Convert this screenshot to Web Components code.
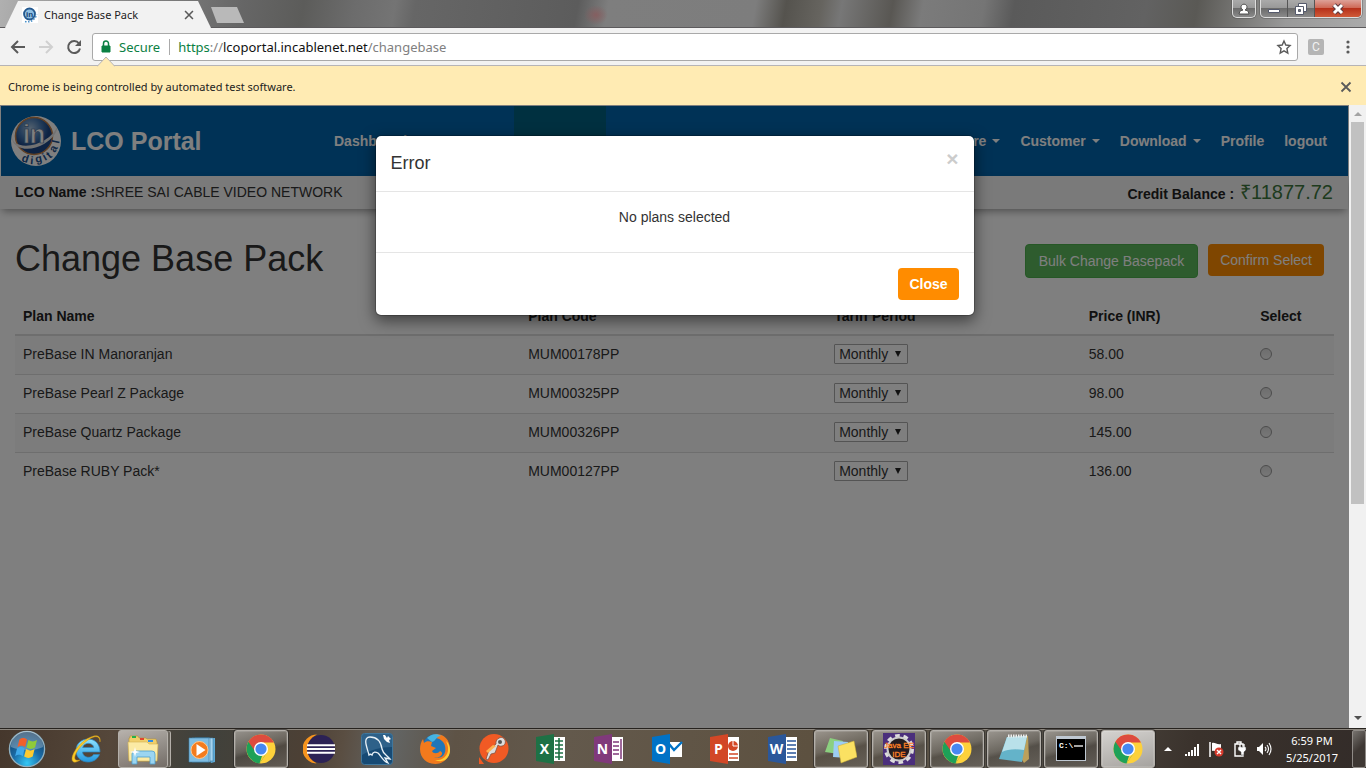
<!DOCTYPE html>
<html lang="en">
<head>
<meta charset="utf-8">
<title>Change Base Pack</title>
<style>
html, body { height: 100%; }
body { margin: 0; font-family: "Liberation Sans", Arial, sans-serif; font-size: 14px; line-height: 20px; color: #333; }
</style>
</head>
<body>
<desktop-screen></desktop-screen>

<script>
const define = (name, html, setup) => {
  const template = document.createElement('template');
  template.innerHTML = html;
  customElements.define(name, class extends HTMLElement {
    constructor() {
      super();
      this.attachShadow({ mode: 'open' }).append(template.content.cloneNode(true));
    }
    connectedCallback() { if (setup) setup(this, this.shadowRoot); }
  });
};

/* ---------- icons ---------- */
const office = (letter, dark, page) => `<svg viewBox="0 0 32 32">
  <path d="M16 4h14v24H16z" fill="#fff"/>${page}
  <path d="M1 4 19 1v30L1 28z" fill="${dark}"/>
  <text x="9.5" y="21" text-anchor="middle" font-family="Open Sans,sans-serif" font-weight="700" font-size="14" fill="#fff">${letter}</text></svg>`;

const ICONS = {
  start: `<svg viewBox="0 0 40 40"><defs><radialGradient id="g" cx=".5" cy=".9" r=".9"><stop offset="0" stop-color="#35c8f5"/><stop offset=".45" stop-color="#1a6ca8"/><stop offset="1" stop-color="#143a5c"/></radialGradient></defs>
   <circle cx="20" cy="20" r="18.5" fill="url(#g)" stroke="#8fb0c0" stroke-width="1.4"/><path d="M3 18a17 17 0 0 1 34 0c-8 4-25 4-34 0z" fill="#fff" opacity=".28"/>
   <path d="M12 10c3-2 5-2 8 0l-2 8c-3-2-5-2-8 0z" fill="#f0602c"/><path d="M21.500 10.500c3 2 6 2 9 0l-2 8c-3 2-6 2-9 0z" fill="#8fca3a"/><path d="M9.500 19.500c3-2 5-2 8 0l-2 8c-3-2-5-2-8 0z" fill="#3fa9ea"/><path d="M19 20c3 2 6 2 9 0l-2 8c-3 2-6 2-9 0z" fill="#fcca30"/></svg>`,
  ie: `<svg viewBox="0 0 32 32"><defs><linearGradient id="g" x2="0" y2="1"><stop offset="0" stop-color="#8fe3ff"/><stop offset="1" stop-color="#2397dd"/></linearGradient></defs>
   <path d="M29 19H11.500c.5 6 9 7 11 2.500h6C24 33 5 31 5 17.500 5 3 29 1 29 19zM11.700 14.500h11c-.5-5.500-10-5.500-11 0z" fill="url(#g)" stroke="#2b85c0" stroke-width=".7"/>
   <path d="M29 9c1-5-2-8-9-5C11 7 1 19 1 26c0 4 4 4 8 1-4 1-6 0-5-4C6 16 16 6 23 4c4-1 6 1 6 5z" fill="#fccb25" stroke="#c9931a" stroke-width=".5"/></svg>`,
  explorer: `<svg viewBox="0 0 32 32"><path d="M2 5h1V3h8l1 2h7l1 1h9l1 3v19H2z" fill="#f0cf6b" stroke="#b99538" stroke-width=".6"/><path d="M5 3h4v2H5z" fill="#25b14b"/><path d="M13 5h4v2h-4z" fill="#e2442e"/><path d="M21 7h5v2h-5z" fill="#2f8ee5"/>
   <path d="M1 9h19l2 2h9l-1 17H2z" fill="#fbeaa4" stroke="#d3b251" stroke-width=".6"/><path d="M5 31V21q0-3 3-3h17q3 0 3 3v10h-5v-7H10v7z" fill="#9bd5f1" stroke="#4c9fce" stroke-width=".8"/><path d="m8 14 1 4 4 1-4 1-1 4-1-4-4-1 4-1z" fill="#fff"/></svg>`,
  wmp: `<svg viewBox="0 0 32 32"><path d="M10 5h18v24l-4 1z" fill="#5fa9d4"/><path d="M8 5h18v23H8z" fill="#a5d3ee" stroke="#3c7fa8" stroke-width=".6"/><path d="M5 5h18v24H5z" fill="#bfe2f5" stroke="#3c7fa8" stroke-width=".6"/><path d="M2 5h20v24H2z" fill="#7fbde2" stroke="#3c7fa8" stroke-width=".6"/><circle cx="12.500" cy="17" r="8.500" fill="#f47c1e" stroke="#ffc78b"/><path d="m9.500 11 9 6-9 6z" fill="#fff"/></svg>`,
  chrome: `<svg viewBox="0 0 32 32"><circle cx="16" cy="16" r="14.500" fill="#fdd13b"/><path d="M16 16 3.400 8.800A14.500 14.500 0 0 0 14.500 30.400L22 19.500z" fill="#1ea158"/><path d="M3.400 8.800A14.500 14.500 0 0 1 29 9.500H16l-6.500 8z" fill="#dd4b3e"/><path d="m22 19.500-7.500 10.900L20 14z" fill="#fdd13b"/><circle cx="16" cy="16" r="7" fill="#fff"/><circle cx="16" cy="16" r="5.600" fill="#4688f1"/></svg>`,
  eclipse: `<svg viewBox="0 0 32 32"><path d="M14 1.500a14.500 14.500 0 0 0 0 29 16 16 0 0 1 0-29z" fill="#f7941e"/><circle cx="18" cy="16" r="14" fill="#2c2255"/><path d="M4 12.200h28M3.800 16h28.400M4 19.800h28" stroke="#fff" stroke-width="1.900"/></svg>`,
  mysql: `<svg viewBox="0 0 32 32"><rect x=".5" y=".5" width="31" height="31" rx="3" fill="#174a74" stroke="#3f779d"/><path d="M1 1h30v13Q14 14 1 22z" fill="#3d7297" opacity=".6"/><path d="M11 22c-1-1-2-1-3 0-1-4-2-6-3-11C4 6 6 4 9 4c7 0 11 5 12 12 1 5 5 6 8 10l-5-1 3 5c-5-2-7-7-10-10-2-1-5-2-6 2z" fill="none" stroke="#e8f1f7" stroke-width="1.300"/><path d="m22 2 1 4 3 3 3 1-1-3 2-1-3-3-1 2-2-3z" fill="#fff"/></svg>`,
  firefox: `<svg viewBox="0 0 32 32"><circle cx="17" cy="14" r="13" fill="#2076b9"/><path d="M14 2c8-3 17 3 17 14 0 8-6 15-14.500 15S1 25 1 16c0-4 1-7 3-10l1 4c2-2 5-2 8-1l-1 4 5 2-4 3c1 3 6 3 8 0 5 2 0 8-6 6 7 3 13-2 11-11-1-4-4-7-9-8z" fill="#f27a1d"/><path d="M27 8c6 12-2 20-11 19 15 6 19-13 11-19z" fill="#ffcd33"/><path d="M8 5c4-4 10-5 14-2-5 0-5 5-9 6z" fill="#45b4e2"/></svg>`,
  postman: `<svg viewBox="0 0 32 32"><circle cx="17" cy="15.500" r="14.500" fill="#f15a24"/><path d="M2 24 7 31H2z" fill="#f15a24"/><path d="m9 26 3-9 7-6c-1-6 7-9 9-4 2 5-4 8-7 5l-3 8-4 1-3 6z" fill="#ddd" stroke="#84503d" stroke-width=".8"/><circle cx="23" cy="9" r="2" fill="#555"/><path d="m9 18 7-6 3 1-8 7z" fill="#ffb04f"/></svg>`,
  excel: office('X', '#1e7145', '<path d="M20 8h8M20 12h8M20 16h8M20 20h8M20 24h8M24 5v22" stroke="#1e7145" stroke-width="1.600"/>'),
  onenote: office('N', '#80397b', '<path d="M20 9h6M20 13h6M20 17h6M20 21h6M28 6v20" stroke="#80397b" stroke-width="1.500"/>'),
  outlook: `<svg viewBox="0 0 32 32"><path d="M17 9h14v15H17z" fill="#fff"/><path d="m18 11 5 6 8-8" stroke="#0072c6" stroke-width="2.400" fill="none"/><path d="M1 4 19 1v30L1 28z" fill="#0072c6"/><text x="9.500" y="21" text-anchor="middle" font-family="Open Sans,sans-serif" font-weight="700" font-size="14" fill="#fff">O</text></svg>`,
  powerpoint: office('P', '#d24726', '<circle cx="24" cy="13" r="5" fill="#d24726"/><path d="M24 13V8M24 13h5" stroke="#fff"/><path d="M20 21h9M20 25h9" stroke="#d24726" stroke-width="1.500"/>'),
  word: office('W', '#2b579a', '<path d="M20 8h9M20 12h9M20 16h9M20 20h9M20 24h9" stroke="#2b579a" stroke-width="1.500"/>'),
  sticky: `<svg viewBox="0 0 32 32"><path d="m5 5 13 3-4 13L0 19z" fill="#8bd07f"/><path d="m9 8 14 1-1 16-14-1z" fill="#9ccdf4"/><path d="m13 13 16-5 3 16-16 6z" fill="#fbe162" stroke="#c9ad35" stroke-width=".5"/></svg>`,
  javaee: `<svg viewBox="0 0 32 32"><path d="M0 0h32v32H0z" fill="#4b2f7c"/><circle cx="16" cy="16" r="13" fill="none" stroke="#ddd" stroke-width="4" stroke-dasharray="4.500 3.660"/><circle cx="16" cy="16" r="11.500" fill="#241d20" stroke="#ccc" stroke-width="2"/><g font-family="Liberation Sans,sans-serif" font-size="8" fill="#ff8a2e" stroke="#ff7e22" stroke-width=".3" text-anchor="middle"><text x="16" y="15">Java EE</text><text x="16" y="24">IDE</text></g></svg>`,
  notepad: `<svg viewBox="0 0 32 32"><path d="m10 4 20-1 1 23-5 4z" fill="#bca05b"/><path d="m9 4 20-1-5 26-23-3z" fill="#64b3c9"/><path d="M9 4 29 3l-3 14Q12 15 4 19z" fill="#b9e1ea"/><path d="M10 3h19" stroke="#eee" stroke-width="3" stroke-dasharray="1.500 1"/></svg>`,
  cmd: `<svg viewBox="0 0 32 32"><path d="M1 3h30v25H1z" fill="#bfc8d2"/><path d="M2 6h28v21H2z"/><text x="4" y="15" font-family="Liberation Mono,monospace" font-weight="700" font-size="8" fill="#fff">C:\\</text><path d="M19 13h9" stroke="#fff" stroke-width="1.300"/></svg>`,
  signal: `<svg viewBox="0 0 16 16"><path d="M1 13h2v2H1zM4 11h2v4H4zM7 9h2v6H7zM10 6h2v9h-2zM13 3h2v12h-2z" fill="#fff"/></svg>`,
  flag: `<svg viewBox="0 0 16 16"><path d="M2 1v15" stroke="#fff" stroke-width="1.500"/><path d="M4 2c3-1 5 2 9 1v8c-4 1-6-2-9-1z" fill="#fff"/><circle cx="11" cy="11" r="4.500" fill="#d63a2c"/><path d="m9 9 4 4m0-4-4 4" stroke="#fff" stroke-width="1.400"/></svg>`,
  plug: `<svg viewBox="0 0 16 16"><path d="M3 3h8v12H3zM5 1h4v2H5z" fill="none" stroke="#fff" stroke-width="1.400"/><path d="M6 6h8v3l-2 2v3h-3v-3L6 9z" fill="#fff" stroke="#444" stroke-width=".5"/><path d="M8 3v4m4-4v4" stroke="#fff" stroke-width="1.300"/></svg>`,
  volume: `<svg viewBox="0 0 16 16"><path d="M1 6h2l4-4v12l-4-4H1z" fill="#fff"/><path d="M9 6q2 2 0 4M11 4q3 4 0 8M13 2q4 6 0 12" fill="none" stroke="#fff" stroke-width="1.100"/></svg>`,
  trayup: `<svg viewBox="0 0 16 16"><path d="M4 10 8 6l4 4z" fill="#fff"/></svg>`,
  scrollup: `<svg viewBox="0 0 16 16"><path d="M4 10 8 6l4 4z" fill="#a3a3a3"/></svg>`,
  scrolldown: `<svg viewBox="0 0 16 16"><path d="m4 6 4 4 4-4z" fill="#505050"/></svg>`,
  back: `<svg viewBox="0 0 16 16"><path d="M15 8H2.500M8 2 2 8l6 6" fill="none" stroke="#5a5a5a" stroke-width="2"/></svg>`,
  forward: `<svg viewBox="0 0 16 16"><path d="M1 8h12.500M8 2l6 6-6 6" fill="none" stroke="#d0d0d0" stroke-width="2"/></svg>`,
  reload: `<svg viewBox="0 0 16 16"><path d="M13 4.500A6 6 0 1 0 14 9.500" fill="none" stroke="#5a5a5a" stroke-width="2"/><path d="M15 1v6H9z" fill="#5a5a5a"/></svg>`,
  lock: `<svg viewBox="0 0 16 16"><path d="M4 7h8v6H4z" fill="#0b8043" stroke="#0b8043" stroke-linejoin="round"/><path d="M5.500 7V4.500a2.500 2.500 0 0 1 5 0V7" fill="none" stroke="#0b8043" stroke-width="1.500"/></svg>`,
  star: `<svg viewBox="0 0 16 16"><path d="m8 2 1.800 4 4.300.5-3.200 3 .9 4.500L8 11.800 4.200 14l.9-4.500-3.200-3L6.200 6z" fill="none" stroke="#5a5a5a" stroke-width="1.400"/></svg>`,
  dots: `<svg viewBox="0 0 16 16"><g fill="#5a5a5a"><circle cx="8" cy="3" r="1.600"/><circle cx="8" cy="8" r="1.600"/><circle cx="8" cy="13" r="1.600"/></g></svg>`,
  cross: `<svg viewBox="0 0 16 16"><path d="m3.500 3.500 9 9m0-9-9 9" stroke="#5a5a5a" stroke-width="1.800"/></svg>`,
  person: `<svg viewBox="0 0 16 16"><path d="M3 13q0-4 4-4a3 3 0 1 1 2 0q4 0 4 4z" fill="#fff" stroke="#444" stroke-width=".9"/></svg>`,
  minimize: `<svg viewBox="0 0 16 16"><path d="M2.500 8.500h11v3h-11z" fill="#fff" stroke="#555a6c"/></svg>`,
  restore: `<svg viewBox="0 0 16 16"><path d="M5.500 2.500h8v8h-8z" fill="#fff" stroke="#555a6c"/><path d="M2.500 5.500h8v8h-8z" fill="#fff" stroke="#555a6c"/><path d="M5.500 8.500h2v2h-2z" fill="#777" stroke="#555a6c"/></svg>`,
  close: `<svg viewBox="0 0 16 16"><path d="m4 4 8 8m0-8-8 8" stroke="#5c3a40" stroke-width="5"/><path d="m4 4 8 8m0-8-8 8" stroke="#fff" stroke-width="3"/></svg>`,
  digital: `<svg viewBox="0 0 50 50"><defs><radialGradient id="g" cx=".4" cy=".3"><stop offset="0" stop-color="#a9c4de"/><stop offset=".6" stop-color="#4478b4"/><stop offset="1" stop-color="#1c4787"/></radialGradient></defs>
   <circle cx="25" cy="25" r="25" fill="#fff"/><circle cx="23" cy="20" r="18.500" fill="url(#g)" stroke="#c28048" stroke-width="1.500"/>
   <path d="M1 22C2 34 20 36 33 28 41 23 47 16 46 11 41 24 16 36 3 26z" fill="#e4e4e4"/><text x="23" y="27" text-anchor="middle" font-family="Liberation Sans,sans-serif" font-size="25" font-weight="700" fill="#fff" stroke="#4d6d96" stroke-width=".7">in</text>
   <g font-family="Liberation Sans,sans-serif" font-size="11" font-weight="700" fill="#1c4f8c"><text x="10 19 25 34" y="45 48 47 45" rotate="18 5 -12 -30">digi</text><text x="39 44 48" y="43 37 28" rotate="-42 -62 -78">tal</text></g></svg>`,
  favicon: `<svg viewBox="0 0 16 16"><path d="M0 0h16v16H0z" fill="#fff"/><circle cx="7.500" cy="7" r="5.500" fill="#8fc0e4" stroke="#24598f" stroke-width="1.800"/><text x="7.500" y="10" text-anchor="middle" font-family="Liberation Sans,sans-serif" font-weight="700" font-size="8" fill="#173f73">in</text><path d="M3 14.500q8 2 12-7" fill="none" stroke="#4a90c8" stroke-width="1.500" stroke-dasharray="1.500 1.500"/></svg>`
};
customElements.define('ui-icon', class extends HTMLElement {
  constructor() { super(); this.attachShadow({ mode: 'open' }); }
  connectedCallback() {
    this.shadowRoot.innerHTML = `<style>:host{display:block;flex:none;width:var(--icon-size,16px);height:var(--icon-size,16px)}svg{display:block;width:100%;height:100%}</style>${ICONS[this.getAttribute('name')] || ''}`;
  }
});

/* ---------- browser window ---------- */
define('window-titlebar', `<style>
:host{display:flex;flex:none;height:28px;box-sizing:border-box;border-bottom:1px solid #5c5a5c;padding-left:5px;font:11px/16px "Noto Sans",sans-serif;color:#222;
 background:radial-gradient(ellipse 12px 10px at 596px 15px,#8a5a5ccc,transparent),linear-gradient(100deg,#b0b0b0 0,#a0a0a0 40px,#666 240px,#5c5c5a 300px,#6c6c6c 350px,#747474 390px,#666 410px,#5c5c5c 570px,#7e7e7e 600px,#7d7d7d 745px,#55534e 775px,#66645f 810px,#777 830px,#595753 880px,#7b7b7b 910px,#757575 970px,#5a5a5a 1000px,#626262 1130px,#5a5955 1180px,#999 1270px,#aaa 100%)}
.tab{display:flex;align-items:center;width:206px;box-sizing:border-box;padding:2px 15px 0 17px;background:#f2f2f2;clip-path:polygon(13px 1px,193px 1px,100% 100%,0 100%);margin-bottom:-1px}
.title{flex:1;margin-left:6px}
button{border:0;padding:0;background:none;display:grid;place-items:center}
.new{width:33px;height:16px;margin-top:7px;background:#b9b9b9;clip-path:polygon(0 0,26px 0,100% 100%,6px 100%)}
.user{margin-left:auto}
.ctl{display:flex;height:18px;box-sizing:border-box;border:1px solid #ddd;border-top:0;border-radius:0 0 5px 5px;overflow:hidden;box-shadow:0 0 0 1px #4445;margin-right:4px;background:linear-gradient(#aaa,#999 45%,#6b6b6b 50%,#8a8a8a)}
.ctl button{width:27px;height:17px;border-right:1px solid #555}
.ctl button:last-child{border-right:0}
.user button{width:22px}
.ctl .close{width:46px;background:linear-gradient(#dda198,#cf6a58 45%,#b7311b 50%,#cf5a38)}
</style>
<div class="tab"><ui-icon name="favicon"></ui-icon><span class="title">Change Base Pack</span><button aria-label="Close tab"><ui-icon name="cross" style="--icon-size:14px"></ui-icon></button></div>
<button class="new" aria-label="New tab"></button>
<div class="ctl user"><button aria-label="User"><ui-icon name="person"></ui-icon></button></div>
<div class="ctl"><button aria-label="Minimize"><ui-icon name="minimize"></ui-icon></button><button aria-label="Restore"><ui-icon name="restore"></ui-icon></button><button class="close" aria-label="Close"><ui-icon name="close"></ui-icon></button></div>`);

define('browser-toolbar', `<style>
:host{display:flex;flex:none;align-items:center;height:38px;box-sizing:border-box;padding:0 10px;gap:12px;background:#f2f2f2;border-bottom:1px solid #b6b4b6;font:13px/20px "Noto Sans",sans-serif}
button{border:0;padding:0;background:none}
.omnibox{flex:1;display:flex;align-items:center;box-sizing:border-box;height:28px;margin:0 -2px 0 -2px;padding:0 5px;background:#fff;border:1px solid #a9a9a9;border-radius:3px;position:relative}
.secure{color:#0b8043;padding:0 9px 0 5px;border-right:1px solid #aaa;line-height:16px}
.url{flex:1;margin-left:8px;color:#808080;outline:0;white-space:nowrap}
.scheme{color:#0b8043}.host{color:#111}
.ext{width:16px;height:16px;margin-right:4px;border-radius:2px;background:#b5b5b5;color:#f2f2f2;font:12px/16px Roboto,sans-serif}
.pointer{position:absolute;left:4px;top:22px;width:18px;height:11px}
nav{display:flex;gap:12px}
</style>
<nav aria-label="History"><button aria-label="Back"><ui-icon name="back"></ui-icon></button><button aria-label="Forward"><ui-icon name="forward"></ui-icon></button><button aria-label="Reload"><ui-icon name="reload"></ui-icon></button></nav>
<div class="omnibox"><ui-icon name="lock"></ui-icon><span class="secure">Secure</span>
<div class="url" role="textbox" aria-label="Address" contenteditable="true" spellcheck="false"><span class="scheme">https</span>://<span class="host">lcoportal.incablenet.net</span>/changebase</div>
<button aria-label="Bookmark"><ui-icon name="star"></ui-icon></button>
<svg class="pointer" viewBox="0 0 18 11"><path d="M0 10.500 9 1l9 9.500" fill="#ffebb3" stroke="#b6b4b6"/></svg></div>
<button class="ext" aria-label="Extension">C</button><button aria-label="Menu"><ui-icon name="dots"></ui-icon></button>`);

define('info-bar', `<style>
:host{display:flex;flex:none;align-items:center;justify-content:space-between;height:39px;box-sizing:border-box;padding:3px 12px 0 8px;background:#ffebb3;font:11px/16px "Noto Sans",sans-serif;color:#222}
button{border:0;padding:0;background:none}
</style><span><slot></slot></span><button aria-label="Dismiss"><ui-icon name="cross"></ui-icon></button>`);

define('scroll-bar', `<style>
:host{display:flex;flex:none;flex-direction:column;width:17px;box-sizing:border-box;align-items:center;background:#f1f1f1;padding:1px 0 2px}
.track{flex:1;width:13px}.thumb{height:65%;background:#c1c1c1}
</style><ui-icon name="scrollup"></ui-icon><div class="track"><div class="thumb"></div></div><ui-icon name="scrolldown"></ui-icon>`);

/* ---------- LCO portal page ---------- */
define('portal-header', `<style>
:host{display:flex;height:70px;margin:1px 1px 0 0;border-left:1px solid #fff;background:#0064ac;color:#fff;font-weight:700}
.brand{display:flex;align-items:center;gap:10px;width:324px;padding-left:10px;box-sizing:border-box;font-size:25px;line-height:30px;color:inherit;text-decoration:none}
nav{flex:1;display:flex;padding-right:10px}
nav a{display:flex;align-items:center;gap:6px;padding:0 9px;margin-right:2px;color:inherit;text-decoration:none}
nav .active{width:74px;margin-left:96px;background:#006080}
.right{display:flex;margin-left:auto}
.caret::after{content:"";border:4px solid transparent;border-top-color:#fff;border-bottom:0}
</style>
<a class="brand" href="#"><ui-icon name="digital" style="--icon-size:50px"></ui-icon>LCO Portal</a>
<nav aria-label="Main"><a href="#">Dashboard</a><a class="active" href="#" aria-label="Current section"></a>
<div class="right"><a class="caret" href="#">More</a><a class="caret" href="#">Customer</a><a class="caret" href="#">Download</a><a href="#">Profile</a><a href="#">logout</a></div></nav>`);

define('account-bar', `<style>
:host{display:flex;justify-content:space-between;height:33px;box-sizing:border-box;padding:6px 15px 0;background:#f4f4f4;box-shadow:0 4px 8px -2px #0006;margin-right:1px}
.credit{display:flex;align-items:baseline;gap:6px;font-weight:700}
output{font-size:20px;font-weight:400;color:#3c763d}
b{color:#222}
</style><div><b>LCO Name :</b><slot name="name"></slot></div><div class="credit"><b>Credit Balance :</b><output>₹<slot name="balance"></slot></output></div>`);

define('app-button', `<style>
:host{display:block}
button{display:block;box-sizing:border-box;font:inherit;line-height:20px;color:#fff;border:0;border-radius:4px;padding:6px 12px;background:#ff8c00}
:host([kind=success]) button{border:1px solid #4cae4c;background:#5cb85c;padding:6px 13px}
:host([slot=actions]) button{padding:6px 11px}
</style><button type="button"><slot></slot></button>`);

define('period-select', `<style>
:host{display:grid;width:74px;height:20px}
select,svg{grid-area:1/1}
select{appearance:none;box-sizing:border-box;width:100%;height:20px;margin:0;border:1px solid #a9a9a9;border-radius:1px;background:#fff;padding:0 4px;font:inherit;line-height:18px;color:#333}
svg{width:8px;height:8px;justify-self:end;align-self:center;margin-right:6px;pointer-events:none}
</style><select aria-label="Tariff Period"><option>Monthly</option></select><svg viewBox="0 0 8 8"><path d="M1 1h6L4 7z" fill="#222"/></svg>`);

define('plan-table', `<style>
:host{display:block}
table{width:100%;table-layout:fixed;border-collapse:collapse}
th{padding:8px;text-align:left;line-height:20px;height:20px}
thead th{border-bottom:2px solid #ddd;color:#222}
td{padding:0 8px 2px;height:36px;line-height:20px}
tbody tr+tr td{border-top:1px solid #ddd}
tbody tr:nth-child(odd){background:#f9f9f9}
input{appearance:none;display:block;width:12px;height:12px;margin:0;box-sizing:border-box;border:1px solid #999;border-radius:50%;background:linear-gradient(#ddd,#eee)}
</style><table><colgroup><col style="width:38.3%"><col style="width:23.2%"><col style="width:19.3%"><col style="width:13%"><col style="width:6.2%"></colgroup>
<thead><tr><th>Plan Name</th><th>Plan Code</th><th>Tariff Period</th><th>Price (INR)</th><th>Select</th></tr></thead><tbody></tbody></table>`, (host, root) => {
  const plans = [['PreBase IN Manoranjan', 'MUM00178PP', '58.00'], ['PreBase Pearl Z Package', 'MUM00325PP', '98.00'], ['PreBase Quartz Package', 'MUM00326PP', '145.00'], ['PreBase RUBY Pack*', 'MUM00127PP', '136.00']];
  root.querySelector('tbody').innerHTML = plans.map(([name, code, price]) =>
    `<tr><td>${name}</td><td>${code}</td><td><period-select></period-select></td><td>${price}</td><td><input type="radio" name="plan" value="${code}" aria-label="Select ${name}"></td></tr>`).join('');
});

define('modal-overlay', `<style>
:host{position:absolute;inset:0;background:rgba(0,0,0,.5)}
dialog{position:static;display:block;box-sizing:border-box;width:600px;max-width:calc(100% - 20px);margin:30px auto 0;padding:0;border:1px solid rgba(0,0,0,.2);border-radius:6px;background:#fff;background-clip:padding-box;color:#333;box-shadow:0 5px 15px rgba(0,0,0,.5)}
header{display:flex;justify-content:space-between;padding:15px;border-bottom:1px solid #e5e5e5}
h4{margin:0;font-size:18px;font-weight:400;line-height:25px}
header button{border:0;padding:0;background:none;font:700 21px/16px "Liberation Sans",sans-serif;height:16px;color:#ccc}
.body{padding:15px 15px 25px;text-align:center}
footer{display:flex;justify-content:flex-end;padding:15px;border-top:1px solid #e5e5e5;font-weight:700}
</style><dialog open aria-labelledby="t"><header><h4 id="t"><slot name="title"></slot></h4><button aria-label="Close">×</button></header><div class="body"><slot></slot></div><footer><slot name="actions"></slot></footer></dialog>`);

define('portal-page', `<style>
:host{display:block;flex:1;min-width:0;position:relative;overflow:hidden;background:#fff}
main{padding:30px 15px 0}
.head{display:flex;justify-content:space-between;margin-bottom:19px}
h1{margin:0;font-size:36px;font-weight:400;line-height:40px}
.actions{display:flex;align-items:flex-start;gap:10px;margin:5px 10px 0 0}
</style>
<portal-header></portal-header>
<account-bar><span slot="name">SHREE SAI CABLE VIDEO NETWORK</span><span slot="balance">11877.72</span></account-bar>
<main><div class="head"><h1>Change Base Pack</h1><div class="actions"><app-button kind="success">Bulk Change Basepack</app-button><app-button>Confirm Select</app-button></div></div>
<plan-table></plan-table></main>
<modal-overlay><span slot="title">Error</span>No plans selected<app-button slot="actions">Close</app-button></modal-overlay>`);

/* ---------- taskbar ---------- */
define('task-button', `<style>
:host{display:block;flex:none;width:54px;height:38px}
button{display:grid;place-items:center;width:100%;height:100%;box-sizing:border-box;padding:0;border:1px solid transparent;background:none;--icon-size:32px}
:host([running]) button{border-color:#b4b0aa;border-radius:3px;background:linear-gradient(165deg,#aaa6a0cc,#77736caa 45%,#55514b88 55%,#6b665fbb);box-shadow:inset 0 0 0 1px #fff2,0 0 0 1px #2228}
:host([active]) button{background:linear-gradient(165deg,#d5d3d0,#a5a29e)}
:host([stacked]) button{width:50px;box-shadow:3px 0 0 -1px #6b665f,4px 0 0 -1px #b4b0aa;background:linear-gradient(165deg,#d0ccc8cc,#8a827daa)}
</style><button><ui-icon></ui-icon></button>`, (host, root) => {
  root.querySelector('ui-icon').setAttribute('name', host.getAttribute('icon'));
  root.querySelector('ui-icon').connectedCallback();
  root.querySelector('button').setAttribute('aria-label', host.getAttribute('icon'));
});

define('task-bar', `<style>
:host{display:flex;flex:none;height:40px;box-sizing:border-box;border-top:1px solid #27231f;box-shadow:inset 0 1px #8c867e;padding-top:1px;
 background:linear-gradient(100deg,#45372c,#55473a 110px,#3f413c 200px,#4c4035 300px,#5a4e42 340px,#626463 390px,#5e5346 450px,#63594c 560px,#5d5140 800px,#57524a 1000px,#3a322c 1180px,#332c29)}
.start{display:grid;flex:none;place-items:center;width:54px;margin-right:6px;padding:0;border:0;background:none;--icon-size:38px}
.apps{display:flex;flex:none;gap:4px}
.recent{display:flex;flex:none;gap:3px;margin-left:3px}
.tray,.status{display:flex;align-items:center}
.tray{flex:none;gap:6px;margin-left:auto;color:#fff}
.status{gap:8px}
time{width:68px;font:11px/17px "Noto Sans",sans-serif;text-align:center}
.desktop{align-self:stretch;width:14px;padding:0;border:1px solid #8f8b87;border-radius:2px;background:linear-gradient(135deg,#77736f,#3e3834 50%)}
</style>
<button class="start" aria-label="Start"><ui-icon name="start"></ui-icon></button>
<div class="apps"><task-button icon="ie"></task-button><task-button icon="explorer" running stacked></task-button><task-button icon="wmp"></task-button><task-button icon="chrome" running></task-button><task-button icon="eclipse"></task-button><task-button icon="mysql"></task-button><task-button icon="firefox"></task-button><task-button icon="postman"></task-button><task-button icon="excel"></task-button><task-button icon="onenote"></task-button><task-button icon="outlook"></task-button><task-button icon="powerpoint"></task-button><task-button icon="word"></task-button><task-button icon="sticky" running></task-button><task-button icon="javaee" running></task-button><task-button icon="chrome" running></task-button></div>
<div class="recent"><task-button icon="notepad" running></task-button><task-button icon="cmd" running></task-button><task-button icon="chrome" running active></task-button></div>
<div class="tray"><div class="status"><ui-icon name="trayup"></ui-icon><ui-icon name="signal"></ui-icon><ui-icon name="flag"></ui-icon><ui-icon name="plug"></ui-icon><ui-icon name="volume"></ui-icon></div><time datetime="2017-05-25T18:59">6:59 PM<br>5/25/2017</time><button class="desktop" aria-label="Show desktop"></button></div>`);

define('desktop-screen', `<style>
:host{display:flex;flex-direction:column;height:100vh;overflow:hidden}
.view{flex:1;min-height:0;display:flex}
</style>
<window-titlebar></window-titlebar><browser-toolbar></browser-toolbar>
<info-bar>Chrome is being controlled by automated test software.</info-bar>
<div class="view"><portal-page></portal-page><scroll-bar></scroll-bar></div>
<task-bar></task-bar>`);
</script>
</body>
</html>
